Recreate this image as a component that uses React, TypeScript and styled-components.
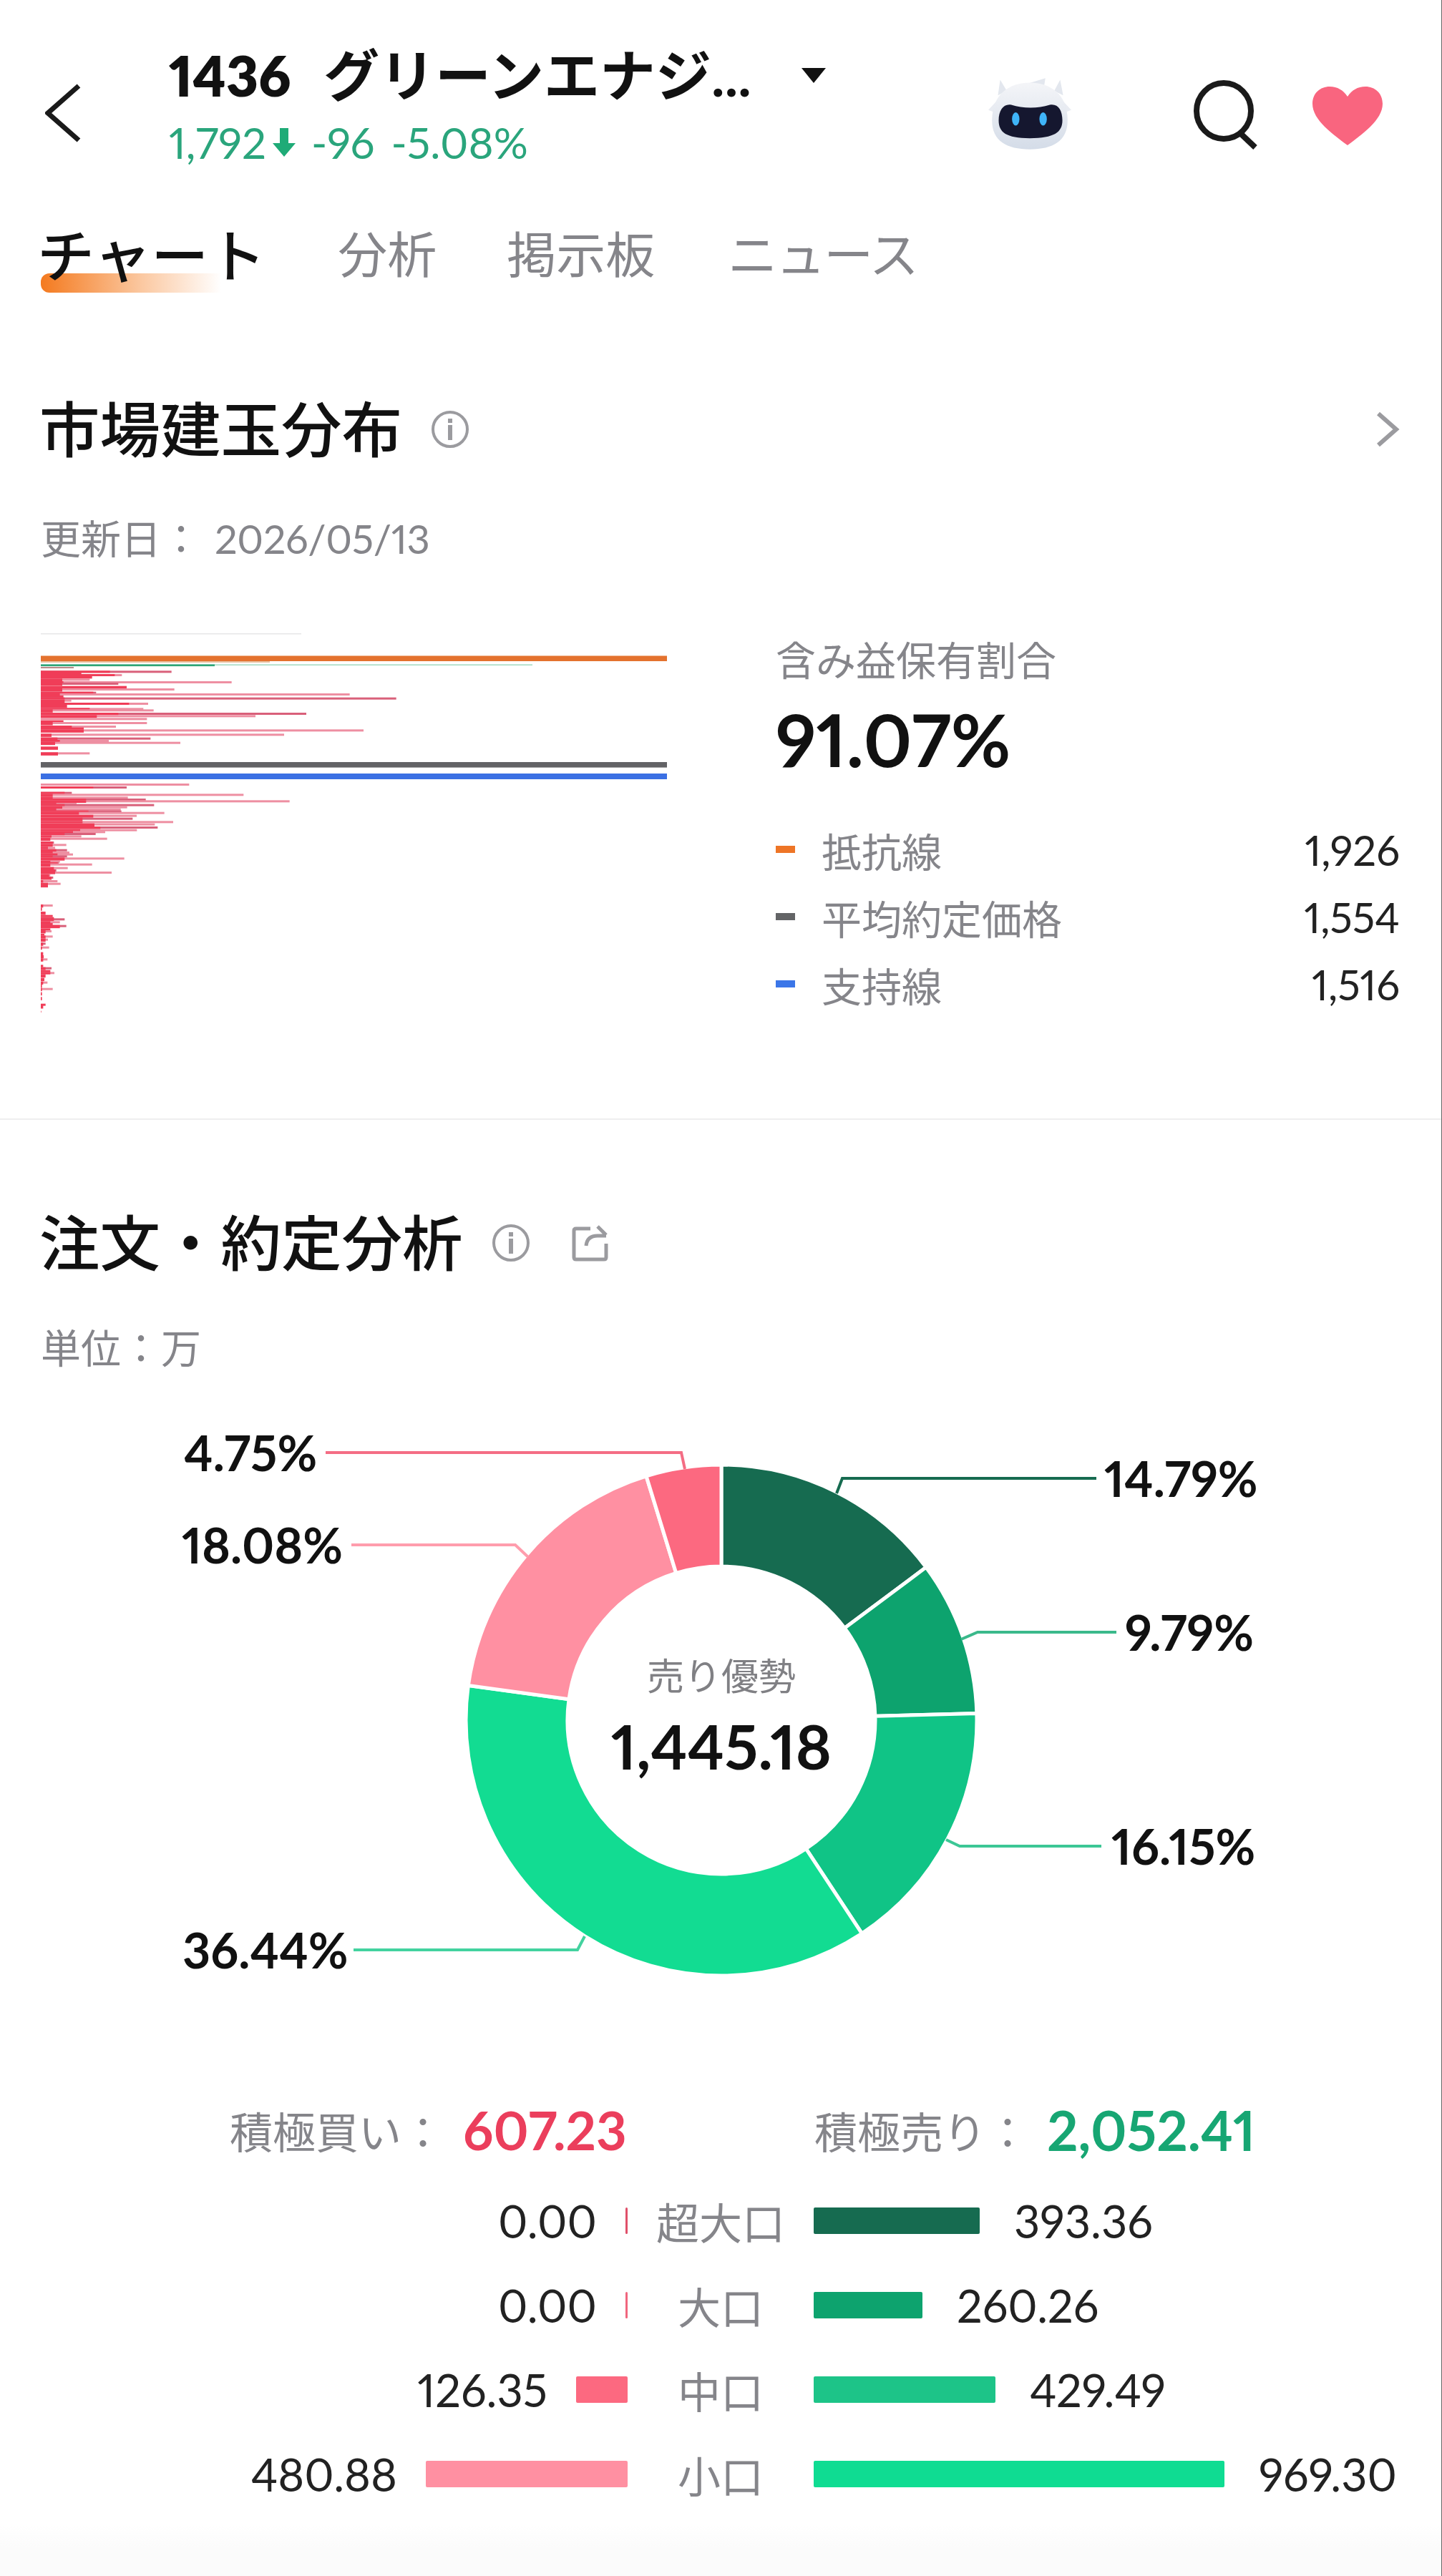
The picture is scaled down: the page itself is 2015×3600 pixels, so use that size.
import React from 'react';
import styled, { createGlobalStyle } from 'styled-components';

const FONT = `Lato, 'Noto Sans CJK JP', sans-serif`;

const Global = createGlobalStyle`
  html, body { margin: 0; padding: 0; background: #fff; }
  body { font-family: ${FONT}; font-variant-numeric: proportional-nums lining-nums; }
`;

const Page = styled.div`
  width: 2015px;
  height: 3600px;
  box-sizing: border-box;
  overflow: hidden;
  background: linear-gradient(#fff 3530px, #fbfbfb 3560px);
  border-right: 1px solid #666;
  font-family: ${FONT};
  color: #111;
`;

/* ---------- header ---------- */
const Header = styled.header`
  height: 240px;
  box-sizing: border-box;
  padding: 66px 0 0 63px;
  display: flex;
  align-items: flex-start;
`;
const BackIcon = styled.svg`
  width: 50px;
  height: 84px;
  margin-top: 51px;
  flex: none;
`;
const TitleBlock = styled.div`
  margin-left: 123px;
  width: 1162px;
  flex: none;
`;
const TitleRow = styled.div`
  display: flex;
  align-items: center;
  height: 78px;
  line-height: 78px;
  white-space: nowrap;
`;
const Code = styled.span`
  width: 216px;
  flex: none;
  font-size: 78px;
  font-weight: 800;
`;
const Name = styled.span`
  font-weight: 700;
  font-size: 78px;
`;
const Caret = styled.i`
  margin-left: 70px;
  width: 0;
  height: 0;
  border-left: 17px solid transparent;
  border-right: 17px solid transparent;
  border-top: 21px solid #111;
`;
const QuoteRow = styled.div`
  display: flex;
  align-items: center;
  margin-top: 25px;
  height: 60px;
  font-size: 60px;
  font-weight: 400;
  color: #2aa57c;
  white-space: nowrap;
`;
const DownArrow = styled.svg`
  width: 34px;
  height: 42px;
  margin: 0 21px 0 8px;
`;
const Delta = styled.span`
  margin-right: 23px;
`;
const HeaderIcons = styled.div`
  display: flex;
  align-items: flex-start;
`;
const RobotIcon = styled.svg`
  width: 118px;
  height: 101px;
  margin: 42px 0 0 -18px;
  flex: none;
`;
const SearchIcon = styled.svg`
  width: 92px;
  height: 98px;
  margin: 45px 0 0 170px;
  flex: none;
`;
const HeartIcon = styled.svg`
  width: 100px;
  height: 84px;
  margin: 54px 0 0 73px;
  flex: none;
`;

/* ---------- tabs ---------- */
const Tabs = styled.nav`
  display: flex;
  align-items: center;
  height: 80px;
  padding: 76px 0 0 52px;
`;
const Tab = styled.span<{ $active?: boolean; $gap: number; $tight?: boolean }>`
  position: relative;
  margin-right: ${p => p.$gap}px;
  font-size: ${p => (p.$active ? 80 : 69)}px;
  font-weight: ${p => (p.$active ? 500 : 400)};
  letter-spacing: ${p => (p.$tight ? -2 : 0)}px;
  line-height: 80px;
  color: ${p => (p.$active ? '#111' : '#85858a')};
  white-space: nowrap;
  z-index: 0;
  ${p =>
    p.$active &&
    `&::after {
      content: '';
      position: absolute;
      left: 5px;
      bottom: -13px;
      width: 252px;
      height: 27px;
      border-radius: 12px 0 0 12px;
      background: linear-gradient(90deg, #f47a1f, #fbc79f 55%, #ffffff);
      z-index: -1;
    }`}
`;

/* ---------- sections ---------- */
const SectionOne = styled.section`
  height: 1169px;
  box-sizing: border-box;
  padding: 154px 58px 0 57px;
  border-bottom: 2px solid #eeeeef;
`;
const SectionTwo = styled.section`
  padding: 122px 0 0 0;
`;
const SectionHead = styled.div`
  display: flex;
  align-items: center;
  height: 100px;
`;
const SectionTwoHead = styled(SectionHead)`
  padding-left: 57px;
`;
const H2 = styled.h2`
  margin: 0 0 0 -2px;
  font-size: 84.5px;
  font-weight: 500;
  line-height: 100px;
  white-space: nowrap;
`;
const InfoIcon = styled.svg`
  width: 54px;
  height: 54px;
  margin-left: 40px;
  flex: none;
`;
const ShareIcon = styled.svg`
  width: 52px;
  height: 52px;
  margin-left: 58px;
  flex: none;
`;
const More = styled.svg`
  width: 34px;
  height: 52px;
  margin-left: auto;
  flex: none;
`;
const Note = styled.div`
  margin-top: 68px;
  height: 70px;
  font-size: 56px;
  line-height: 70px;
  color: #85858a;
  white-space: nowrap;
`;
const NoteTwo = styled(Note)`
  margin-top: 62px;
  padding-left: 57px;
`;
const DateText = styled.span`
  margin-left: 19px;
  letter-spacing: -0.4px;
`;

const ChartRow = styled.div`
  display: flex;
  margin-top: 97px;
`;
const BarsSvg = styled.svg`
  width: 875px;
  height: 530px;
  flex: none;
`;
const Summary = styled.div`
  margin-left: 152px;
  flex: 1;
`;
const SummaryLabel = styled.div`
  height: 76px;
  font-size: 56px;
  line-height: 76px;
  color: #85858a;
`;
const SummaryValue = styled.div`
  height: 144px;
  font-size: 102px;
  font-weight: 700;
  line-height: 144px;
  color: #111;
`;
const Legend = styled.div`
  margin-top: 35px;
`;
const LegendRow = styled.div`
  display: flex;
  align-items: center;
  height: 94px;
  font-size: 56px;
`;
const Dash = styled.i<{ $color: string }>`
  width: 27px;
  height: 10px;
  background: ${p => p.$color};
  flex: none;
`;
const LegendName = styled.span`
  margin-left: 37px;
  color: #85858a;
`;
const LegendValue = styled.span`
  margin-left: auto;
  color: #222;
  font-size: 58px;
`;

/* ---------- donut ---------- */
const Canvas = styled.div`
  position: relative;
  height: 840px;
  margin-top: 41px;
`;
const CanvasSvg = styled.svg`
  display: block;
  width: 2015px;
  height: 840px;
`;
const Percent = styled.span<{ $x: number; $y: number }>`
  position: absolute;
  left: ${p => p.$x}px;
  top: ${p => p.$y - 1960 - 40}px;
  font-size: 68px;
  font-weight: 700;
  line-height: 80px;
  color: #111;
  white-space: nowrap;
`;
const Center = styled.div`
  position: absolute;
  left: 708px;
  top: 334px;
  width: 600px;
  text-align: center;
`;
const CenterLabel = styled.div`
  height: 94px;
  font-size: 52px;
  line-height: 96px;
  color: #808084;
`;
const CenterValue = styled.div`
  height: 104px;
  font-size: 86px;
  font-weight: 700;
  line-height: 104px;
  color: #111;
`;

/* ---------- totals and rows ---------- */
const Totals = styled.div`
  display: flex;
  height: 80px;
  margin-top: 136px;
  padding-left: 321px;
  align-items: center;
  white-space: nowrap;
`;
const TotalItem = styled.div<{ $width: number }>`
  display: flex;
  align-items: center;
  width: ${p => p.$width}px;
  flex: none;
`;
const TotalLabel = styled.span`
  font-size: 60px;
  color: #85858a;
`;
const TotalValue = styled.span<{ $color: string; $gap: number; $size: number }>`
  margin-left: ${p => p.$gap}px;
  font-size: ${p => p.$size}px;
  font-weight: 700;
  color: ${p => p.$color};
`;
const Rows = styled.div`
  margin-top: 28px;
`;
const Row = styled.div`
  display: grid;
  grid-template-columns: 877px 260px 1fr;
  height: 118px;
  align-items: center;
`;
const BuySide = styled.div`
  display: flex;
  justify-content: flex-end;
  align-items: center;
`;
const SellSide = styled.div`
  display: flex;
  align-items: center;
`;
const Size = styled.div`
  text-align: center;
  font-size: 60px;
  color: #85858a;
`;
const Amount = styled.span`
  font-size: 63px;
  color: #222;
`;
const BuyAmount = styled(Amount)`
  margin-right: 40px;
`;
const SellAmount = styled(Amount)`
  margin-left: 48px;
`;
const Bar = styled.i<{ $color: string; $w: number }>`
  width: ${p => p.$w}px;
  height: 37px;
  border-radius: 2px;
  background: ${p => p.$color};
  flex: none;
`;

/* ---------- data ---------- */
type R = [number, number, number?];
const upper: R[] = [
  [202, 340, 598], [210, 220], [216, 360, 390], [225, 265], [235, 140, 255], [246, 145, 850], [252, 140, 375],
  [266, 410], [276, 140, 610], [290, 270, 282], [297, 130, 1345], [306, 145], [314, 150, 1540], [323, 150, 178],
  [336, 420, 500], [345, 160], [358, 255, 480], [364, 100, 523], [378, 375, 1163], [388, 285, 950], [400, 50, 495],
  [410, 145], [417, 100, 495], [432, 180, 365], [440, 230], [448, 230, 1403], [466, 95, 1070], [482, 120, 510],
  [492, 130, 335], [500, 110, 635], [520, 122], [544, 122, 255], [675, 50, 672], [687, 270, 410],
];
const lower: R[] = [
  [50, 150, 180], [58, 100, 900], [70, 100, 415], [78, 240, 490], [85, 240, 1093], [96, 115, 200], [101, 150, 525],
  [110, 140, 412], [120, 115, 385], [128, 250, 388], [134, 210, 568], [146, 270, 452], [158, 225, 435], [172, 225, 605],
  [182, 275, 528], [195, 300, 540], [206, 215, 453], [214, 185, 320], [222, 150, 280], [232, 95, 220], [242, 90, 328],
  [258, 100, 105], [268, 100, 157], [280, 80, 110], [290, 115, 160], [300, 100, 170], [308, 120, 185], [316, 100, 160],
  [325, 150, 400], [338, 90, 130], [345, 120, 125], [350, 90, 265], [365, 105, 163], [375, 110, 115], [384, 110, 347],
  [395, 85, 90], [405, 95, 102], [420, 60, 120], [431, 80, 133], [437, 80],
  [522, 60, 100], [535, 55], [552, 70], [566, 100], [575, 105], [580, 105, 150], [592, 90, 130], [600, 100], [608, 130, 157],
  [622, 90], [630, 70, 95], [645, 65], [652, 70, 100], [665, 70, 80], [682, 60, 70], [698, 55, 85], [722, 60], [735, 62],
  [748, 60, 78], [775, 60], [785, 70, 95], [797, 90], [805, 90, 107], [815, 70], [830, 65], [845, 60, 78], [858, 55],
  [872, 55, 100], [890, 55], [910, 55], [938, 70], [945, 60], [968, 52],
];
const toBars = (rows: R[], origin: number) =>
  rows.map(([Y, inner, outer], i) => {
    const next = rows[i + 1]?.[0] ?? Y + 6;
    return {
      y: origin + Y / 3,
      h: Math.max(3, Math.min((next - Y) / 3, 4.5)),
      inner: (inner - 50) / 3,
      outer: outer ? (outer - 50) / 3 : 0,
      tone: i % 3 === 0 ? '#d9607a' : '#ee8fa2',
    };
  });
const bars = [...toBars(upper, 870), ...toBars(lower, 1090)];

const slices = [
  { v: 14.79, c: '#166b50' },
  { v: 9.79, c: '#0da36e' },
  { v: 16.15, c: '#10c486' },
  { v: 36.44, c: '#12dc92' },
  { v: 18.08, c: '#ff90a2' },
  { v: 4.75, c: '#fc6980' },
];
const CX = 1008;
const CY = 2404;
const RO = 357;
const RI = 215;
const pt = (r: number, pct: number) => {
  const a = (pct / 100) * Math.PI * 2;
  return `${CX + r * Math.sin(a)} ${CY - r * Math.cos(a)}`;
};
let acc = 0;
const arcs = slices.map(s => {
  const a = acc;
  const b = acc + s.v;
  acc = b;
  const large = s.v > 50 ? 1 : 0;
  return {
    c: s.c,
    d: `M${pt(RO, a)} A${RO} ${RO} 0 ${large} 1 ${pt(RO, b)} L${pt(RI, b)} A${RI} ${RI} 0 ${large} 0 ${pt(RI, a)} Z`,
  };
});
const leaders = [
  { c: '#166b50', p: '1169,2087 1177,2066 1532,2066' },
  { c: '#3bb98b', p: '1343,2291 1366,2281 1560,2281' },
  { c: '#3cc795', p: '1322,2571 1341,2580 1539,2580' },
  { c: '#43d29f', p: '817,2706 807,2725 494,2725' },
  { c: '#ff9dad', p: '738,2176 720,2159 491,2159' },
  { c: '#f46d84', p: '957,2053 952,2030 455,2030' },
];
const percents = [
  { x: 1543, y: 2066, t: '14.79%' },
  { x: 1572, y: 2281, t: '9.79%' },
  { x: 1553, y: 2580, t: '16.15%' },
  { x: 255, y: 2725, t: '36.44%' },
  { x: 254, y: 2159, t: '18.08%' },
  { x: 257, y: 2030, t: '4.75%' },
];
const sizes = [
  { n: '超大口', b: '0.00', bw: 3, bc: '#e0506a', s: '393.36', sw: 232, sc: '#166b50' },
  { n: '大口', b: '0.00', bw: 3, bc: '#f0667e', s: '260.26', sw: 152, sc: '#0da36e' },
  { n: '中口', b: '126.35', bw: 72, bc: '#fc6980', s: '429.49', sw: 254, sc: '#1dc488' },
  { n: '小口', b: '480.88', bw: 282, bc: '#ff90a2', s: '969.30', sw: 574, sc: '#0fdc92' },
];

const Info = () => (
  <InfoIcon viewBox="0 0 54 54">
    <circle cx="27" cy="27" r="24" fill="none" stroke="#9b9b9f" strokeWidth="4" />
    <rect x="24" y="12" width="6" height="6" fill="#9b9b9f" />
    <rect x="24" y="21" width="6" height="21" fill="#9b9b9f" />
  </InfoIcon>
);

export default function App() {
  return (
    <Page>
      <Global />
      <Header>
        <BackIcon viewBox="0 0 50 84">
          <path d="M47 3 L4 41 L47 79" fill="none" stroke="#1a1a1a" strokeWidth="7" />
        </BackIcon>
        <TitleBlock>
          <TitleRow>
            <Code>1436</Code>
            <Name>グリーンエナジ...</Name>
            <Caret />
          </TitleRow>
          <QuoteRow>
            <span>1,792</span>
            <DownArrow viewBox="0 0 34 42">
              <path d="M11 1 H23 V22 H33 L17 41 L1 22 H11 Z" fill="#1fab77" />
            </DownArrow>
            <Delta>-96</Delta>
            <span>-5.08%</span>
          </QuoteRow>
        </TitleBlock>
        <HeaderIcons>
          <RobotIcon viewBox="0 0 114 97">
            <defs>
              <linearGradient id="robotShell" x1="0" y1="0" x2="0" y2="1">
                <stop offset="0" stopColor="#f4f5f8" />
                <stop offset="1" stopColor="#d4dce8" />
              </linearGradient>
            </defs>
            <path d="M14 24 L17 3 L26 18 Z M90 18 L98 3 L102 24 Z M48 10 L78 1 L76 14 Z" fill="#e3e7ee" />
            <path d="M1 44 L12 32 L12 48 Z M113 44 L102 32 L102 48 Z" fill="#e9ecf2" />
            <path d="M6 58 C6 22 30 7 57 7 C84 7 108 22 108 58 C108 86 88 97 57 97 C26 97 6 86 6 58 Z" fill="url(#robotShell)" />
            <path d="M15 58 C15 44 22 35 32 37 C48 42 68 42 84 37 C95 35 101 44 101 58 C101 74 90 82 57 82 C25 82 15 74 15 58 Z" fill="#15172f" />
            <ellipse cx="38" cy="56" rx="5" ry="9" fill="#3fb4f8" />
            <ellipse cx="75" cy="56" rx="5" ry="9" fill="#3fb4f8" />
          </RobotIcon>
          <SearchIcon viewBox="0 0 92 98">
            <ellipse cx="42" cy="44" rx="38" ry="39" fill="none" stroke="#1a1a1a" strokeWidth="8" />
            <path d="M66 76 L86 95" fill="none" stroke="#1a1a1a" strokeWidth="8" />
          </SearchIcon>
          <HeartIcon viewBox="0 0 100 84">
            <path d="M50 83 C30 68 1 48 1 25 C1 10 12 1 25 1 C36 1 44 6 50 15 C56 6 64 1 75 1 C88 1 99 10 99 25 C99 48 70 68 50 83 Z" fill="#f9657f" />
          </HeartIcon>
        </HeaderIcons>
      </Header>

      <Tabs>
        <Tab $active $gap={101}>チャート</Tab>
        <Tab $gap={98}>分析</Tab>
        <Tab $gap={102}>掲示板</Tab>
        <Tab $gap={0} $tight>ニュース</Tab>
      </Tabs>

      <SectionOne>
        <SectionHead>
          <H2>市場建玉分布</H2>
          <Info />
          <More viewBox="0 0 34 52">
            <path d="M4 4 L29 26 L4 48" fill="none" stroke="#9b9b9f" strokeWidth="6" />
          </More>
        </SectionHead>
        <Note>
          更新日：<DateText>2026/05/13</DateText>
        </Note>
        <ChartRow>
          <BarsSvg viewBox="57 885 875 530">
            <defs>
              <filter id="soft" x="-2%" y="-2%" width="104%" height="104%">
                <feGaussianBlur stdDeviation="0.35" />
              </filter>
            </defs>
            <g filter="url(#soft)">
              <rect x="57" y="885" width="364" height="1.5" fill="#e6e6e8" />
              <rect x="57" y="924" width="320" height="2" fill="#e8c0a0" />
              <rect x="57" y="928.4" width="687" height="1.6" fill="#a6dcc4" />
              <rect x="57" y="928.5" width="243" height="2.6" fill="#2fa578" />
              <rect x="57" y="932" width="46" height="2" fill="#b98a88" />
              {bars.map((b, i) => (
                <React.Fragment key={i}>
                  {b.outer > 0 && <rect x="57" y={b.y} width={b.outer} height="3" fill={b.tone} />}
                  <rect x="57" y={b.y} width={b.inner} height={b.h} fill="#f03e58" />
                </React.Fragment>
              ))}
              <rect x="57" y="916.5" width="875" height="7.5" fill="#e4722f" />
              <rect x="57" y="1065" width="875" height="7.6" fill="#636466" />
              <rect x="57" y="1081" width="875" height="8" fill="#3b6fe3" />
            </g>
          </BarsSvg>
          <Summary>
            <SummaryLabel>含み益保有割合</SummaryLabel>
            <SummaryValue>91.07%</SummaryValue>
            <Legend>
              <LegendRow>
                <Dash $color="#ee7526" />
                <LegendName>抵抗線</LegendName>
                <LegendValue>1,926</LegendValue>
              </LegendRow>
              <LegendRow>
                <Dash $color="#636466" />
                <LegendName>平均約定価格</LegendName>
                <LegendValue>1,554</LegendValue>
              </LegendRow>
              <LegendRow>
                <Dash $color="#3b76e8" />
                <LegendName>支持線</LegendName>
                <LegendValue>1,516</LegendValue>
              </LegendRow>
            </Legend>
          </Summary>
        </ChartRow>
      </SectionOne>

      <SectionTwo>
        <SectionTwoHead>
          <H2>注文・約定分析</H2>
          <Info />
          <ShareIcon viewBox="0 0 52 52">
            <path d="M26 6 H6 Q3 6 3 9 V46 Q3 49 6 49 H45 Q48 49 48 46 V27" fill="none" stroke="#9b9b9f" strokeWidth="5" />
            <path d="M20 30 C21 20 27 16 36 16 H48 M36 3 L48 15" fill="none" stroke="#9b9b9f" strokeWidth="5" />
          </ShareIcon>
        </SectionTwoHead>
        <NoteTwo>単位：万</NoteTwo>
        <Canvas>
          <CanvasSvg viewBox="0 1960 2015 840">
            {arcs.map((a, i) => (
              <path key={i} d={a.d} fill={a.c} stroke="#fff" strokeWidth="5" />
            ))}
            {leaders.map((l, i) => (
              <polyline key={i} points={l.p} fill="none" stroke={l.c} strokeWidth="4" />
            ))}
          </CanvasSvg>
          {percents.map(p => (
            <Percent key={p.t} $x={p.x} $y={p.y}>
              {p.t}
            </Percent>
          ))}
          <Center>
            <CenterLabel>売り優勢</CenterLabel>
            <CenterValue>1,445.18</CenterValue>
          </Center>
        </Canvas>
        <Totals>
          <TotalItem $width={817}>
            <TotalLabel>積極買い：</TotalLabel>
            <TotalValue $color="#eb3e5c" $gap={26} $size={74}>607.23</TotalValue>
          </TotalItem>
          <TotalItem $width={800}>
            <TotalLabel>積極売り：</TotalLabel>
            <TotalValue $color="#17a673" $gap={25} $size={76}>2,052.41</TotalValue>
          </TotalItem>
        </Totals>
        <Rows>
          {sizes.map(s => (
            <Row key={s.n}>
              <BuySide>
                <BuyAmount>{s.b}</BuyAmount>
                <Bar $color={s.bc} $w={s.bw} />
              </BuySide>
              <Size>{s.n}</Size>
              <SellSide>
                <Bar $color={s.sc} $w={s.sw} />
                <SellAmount>{s.s}</SellAmount>
              </SellSide>
            </Row>
          ))}
        </Rows>
      </SectionTwo>
    </Page>
  );
}
